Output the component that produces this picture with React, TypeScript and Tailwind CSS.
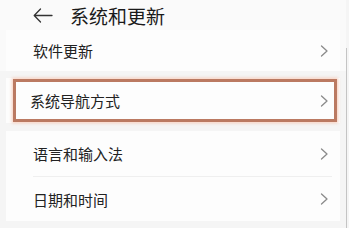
import React from "react";

const Chevron = () => (
  <svg width="9" height="12" viewBox="0 0 9 12" fill="none" className="shrink-0">
    <path d="M1.5 1 L7 6 L1.5 11" stroke="#8a8a8a" strokeWidth="1.3" strokeLinecap="round" strokeLinejoin="round" />
  </svg>
);

const Row = ({ label, h }: { label: string; h: string }) => (
  <div className={`flex items-center justify-between pl-[27px] pr-[11px] ${h}`}>
    <span className="text-[15px] leading-none text-[#222222]">{label}</span>
    <Chevron />
  </div>
);

export default function App() {
  return (
    <div
      className="relative w-[349px] h-[228px] overflow-hidden bg-[#f5f5f5]"
      style={{ fontFamily: '"Noto Sans CJK SC", "Noto Sans", sans-serif' }}
    >
      <div className="w-[346px] bg-[#f5f5f5]">
        <div className="bg-[#fafafa] pl-[6px] pr-[6px]">
          <div className="flex items-center h-[30px] pl-[27px]">
            <svg width="20" height="15" viewBox="0 0 20 15" fill="none" className="shrink-0">
              <path d="M19 7.5 H1.5 M7.5 1 L1.2 7.5 L7.5 14" stroke="#333" strokeWidth="1.3" strokeLinecap="round" strokeLinejoin="round" />
            </svg>
            <span className="ml-[17px] text-[19px] leading-none font-normal text-[#1a1a1a]">系统和更新</span>
          </div>
          <div className="bg-[#fdfdfd]">
            <Row label="软件更新" h="h-[41px]" />
          </div>
        </div>
        <div className="h-[7px]" />
        <div className="mx-[6px] bg-[#fdfdfd] py-[1px]">
          <div className="ml-[7px] mr-[3px] border-[3px] border-[#bb7a62] shadow-[0_0_3px_1px_rgba(240,170,140,0.6)]">
            <div className="flex items-center justify-between pl-[14px] pr-[5px] h-[37px]">
              <span className="text-[15px] leading-none text-[#222222]">系统导航方式</span>
              <Chevron />
            </div>
          </div>
        </div>
        <div className="h-[8px]" />
        <div className="mx-[6px] bg-[#fdfdfd]">
          <Row label="语言和输入法" h="h-[45px]" />
          <div className="ml-[27px] mr-[8px] h-px bg-[#efefef]" />
          <Row label="日期和时间" h="h-[44px]" />
        </div>
      </div>
      <div className="absolute right-[2px] top-[48px] bottom-0 w-px bg-[#c4c4c4]" />
    </div>
  );
}
